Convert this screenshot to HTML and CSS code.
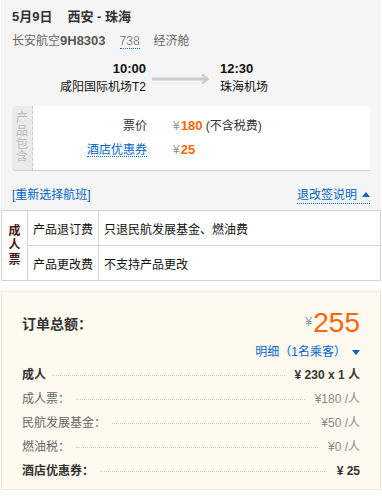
FILE: index.html
```html
<!DOCTYPE html>
<html lang="zh-CN">
<head>
<meta charset="utf-8">
<title>订单</title>
<link rel="stylesheet" href="styles.css">
</head>
<body>
<div class="wrap">
  <section class="top">
    <div class="title"><span>5月9日</span><span>西安 - 珠海</span></div>
    <div class="info">
      <span>长安航空<b class="fno">9H8303</b></span>
      <span class="plane">738</span>
      <span>经济舱</span>
    </div>
    <div class="times">
      <div class="dep">
        <div class="t">10:00</div>
        <div class="ap">咸阳国际机场T2</div>
      </div>
      <div class="arrow">
        <svg width="58" height="12" viewBox="0 0 58 12"><path d="M0 6H55" stroke="#cccccc" stroke-width="3" fill="none"/><path d="M50 1.5L55.5 6L50 10.5" stroke="#cccccc" stroke-width="2.5" fill="none"/></svg>
      </div>
      <div class="arr">
        <div class="t">12:30</div>
        <div class="ap">珠海机场</div>
      </div>
    </div>
    <div class="card">
      <div class="card-label"><span>产</span><span>品</span><span>包</span><span>含</span></div>
      <div class="card-body">
        <div class="crow"><span class="ck">票价</span><span class="cv"><span class="yen">¥</span><b class="price">180</b> (不含税费)</span></div>
        <div class="crow"><span class="ck"><a class="dlink">酒店优惠券</a></span><span class="cv"><span class="yen">¥</span><b class="price">25</b></span></div>
      </div>
    </div>
    <div class="actions">
      <a class="blue">[重新选择航班]</a>
      <a class="blue rules">退改签说明<span class="tri-up"></span></a>
    </div>
  </section>
  <table class="policy">
    <tr>
      <td class="who" rowspan="2"><span>成</span><span>人</span><span>票</span></td>
      <td class="k">产品退订费</td>
      <td class="v">只退民航发展基金、燃油费</td>
    </tr>
    <tr>
      <td class="k">产品更改费</td>
      <td class="v">不支持产品更改</td>
    </tr>
  </table>
  <section class="order">
    <div class="total">
      <span class="total-label">订单总额：</span>
      <span class="amount"><span class="ayen">¥</span><span class="num">255</span></span>
    </div>
    <div class="detail"><span class="blue">明细（1名乘客）</span><span class="tri-down"></span></div>
    <div class="line strong"><span>成人</span><span class="dots"></span><span>¥ 230 x 1 人</span></div>
    <div class="line sub"><span>成人票：</span><span class="dots"></span><span class="val">¥180 /人</span></div>
    <div class="line sub"><span>民航发展基金：</span><span class="dots"></span><span class="val">¥50 /人</span></div>
    <div class="line sub"><span>燃油税：</span><span class="dots"></span><span class="val">¥0 /人</span></div>
    <div class="line strong"><span>酒店优惠券：</span><span class="dots"></span><span>¥ 25</span></div>
  </section>
</div>
</body>
</html>
```

FILE: styles.css
```css
* { box-sizing: border-box; }
body {
  margin: 0;
  background: #fff;
  font-family: "Liberation Sans", "Noto Sans CJK SC", sans-serif;
  font-size: 12px;
  color: #333;
}
a { text-decoration: none; cursor: pointer; }
.blue { color: #0066cc; }
.wrap { width: 380px; margin-left: 1px; }

.top { background: #f5f5f5; padding: 7px 11px 0; }
.title {
  display: flex; gap: 15px;
  font-size: 13px; font-weight: bold; line-height: 20px; color: #333;
}
.info {
  margin-top: 5px; display: flex; align-items: center; gap: 14px;
  line-height: 18px; color: #666;
}
.fno { font-size: 13px; color: #555; }
.plane { color: #888; line-height: 14px; border-bottom: 1px dotted #0066cc; }

.times { margin-top: 10px; display: flex; align-items: center; }
.dep { width: 134px; text-align: right; }
.t { font-size: 13px; font-weight: bold; line-height: 18px; color: #111; }
.ap { line-height: 19px; color: #111; }
.arrow { margin-left: 6px; width: 58px; height: 12px; display: flex; }
.arr { margin-left: 10px; }

.card { margin-top: 9px; display: flex; }
.card-label {
  width: 21px; background: #ebebeb; border-right: 1px dashed #c8c8c8;
  border-radius: 4px 0 0 4px; color: #bbb; line-height: 13px;
  display: flex; flex-direction: column; align-items: center; justify-content: center;
  border-bottom: 1px solid #d0d0d0;
}
.card-body { flex: 1; background: #fff; border-bottom: 1px solid #d0d0d0; padding: 8px 0; }
.crow { display: flex; line-height: 24px; }
.ck { width: 114px; text-align: right; color: #333; }
.cv { margin-left: 26px; color: #333; }
.yen { color: #999; margin-right: 1px; }
.price { color: #ff6600; font-size: 13px; }
.dlink { display: inline-block; line-height: 12px; color: #0066cc; border-bottom: 1px dotted #0066cc; }

.actions {
  display: flex; justify-content: space-between; align-items: center;
  padding: 14px 0 5px; line-height: 20px;
}
.rules { display: flex; align-items: center; line-height: 16px; border-bottom: 1px dotted #0066cc; }
.tri-up {
  margin-left: 5px; width: 0; height: 0;
  border-left: 4px solid transparent; border-right: 4px solid transparent;
  border-bottom: 5px solid #0066cc;
}

.policy {
  width: 380px; border-collapse: collapse; background: #fff;
  border: 1px solid #d4d4d4;
}
.policy td { border: 1px solid #d4d4d4; height: 35px; padding: 0 5px; color: #111; }
.policy .who {
  width: 26px; padding: 0; text-align: center; font-weight: bold; color: #4a1818;
  line-height: 14.5px;
}
.policy .who span { display: block; }
.policy .k { width: 71px; }

.order {
  margin-top: 10px; background: #fffaf0; border: 1px solid #f0e8d8;
  padding: 13px 20px 6px;
}
.total { display: flex; justify-content: space-between; align-items: center; height: 36px; }
.total-label { font-size: 14px; font-weight: bold; color: #333; }
.amount { display: flex; align-items: center; }
.ayen { color: #999; font-size: 13px; margin-right: 1px; margin-top: -4px; }
.num { color: #ff6600; font-size: 28px; line-height: 36px; }
.detail { display: flex; justify-content: flex-end; align-items: center; line-height: 22px; }
.tri-down {
  margin-left: 6px; width: 0; height: 0;
  border-left: 4px solid transparent; border-right: 4px solid transparent;
  border-top: 5px solid #0066cc;
}
.line { display: flex; align-items: center; line-height: 24px; }
.line .dots { flex: 1; border-bottom: 1px dotted #c8c8c8; margin: 0 10px 0 6px; }
.strong { font-weight: bold; color: #333; }
.sub { color: #666; }
.sub .val { color: #888; }
```
